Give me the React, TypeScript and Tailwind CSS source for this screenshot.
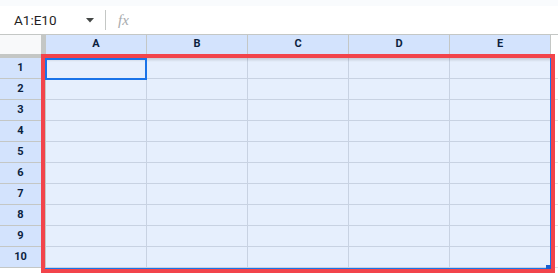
import React from "react";

const cols = ["A", "B", "C", "D", "E"];
const rows = [1, 2, 3, 4, 5, 6, 7, 8, 9, 10];

export default function App() {
  return (
    <div
      className="relative w-[558px] h-[274px] overflow-hidden bg-white"
      style={{ fontFamily: "Roboto, 'Liberation Sans', Arial, sans-serif" }}
    >
      <div className="h-[6px] bg-[#f9fbfd]" />
      {/* formula bar */}
      <div className="flex h-[28px] items-center">
        <div className="w-[76px] pl-[14px] text-[13.5px] text-[#1f1f1f]">A1:E10</div>
        <svg width="8" height="5" viewBox="0 0 8 5" className="ml-[10px]">
          <path d="M0 0 L8 0 L4 4.5 Z" fill="#444746" />
        </svg>
        <div className="ml-[11px] h-[20px] w-px bg-[#c4c7c5]" />
        <div
          className="ml-[12px] text-[15px] italic text-[#a8abae]"
          style={{ fontFamily: "'Liberation Serif', 'DejaVu Serif', serif" }}
        >
          fx
        </div>
      </div>
      {/* header row */}
      <div className="flex h-[20px] border-t border-[#c4c7c5]">
        <div className="w-[41px] bg-[#f8f9fa]" />
        <div className="w-[5px] bg-[#c4c7c5]" />
        {cols.map((c) => (
          <div
            key={c}
            className="flex w-[101px] items-center justify-center border-r border-[#c4c7c5] bg-[#d3e3fd] text-[11px] font-bold text-[#0b1f3f]"
          >
            {c}
          </div>
        ))}
        <div className="flex-1 bg-white" />
      </div>
      <div className="flex h-[4px]">
        <div className="w-[551px] bg-[#c4c7c5]" />
        <div className="flex-1 bg-white" />
      </div>
      {/* body */}
      {rows.map((r) => (
        <div key={r} className="flex h-[21px]">
          <div className="flex w-[41px] items-center justify-center border-b border-[#c4c7c5] bg-[#d3e3fd] text-[11px] font-bold text-[#0b1f3f]">
            {r}
          </div>
          <div className="w-[5px] bg-[#c4c7c5]" />
          {cols.map((c) => (
            <div
              key={c}
              className="w-[101px] border-r border-b border-[#c8d2e2] bg-[#e6effd]"
            />
          ))}
          <div className="flex-1 border-b border-[#e1e1e1] bg-white" />
        </div>
      ))}

      {/* header shadow */}
      <div className="absolute left-[45px] top-[58px] h-[4px] w-[506px] bg-gradient-to-b from-[#00000026] to-transparent" />
      {/* active cell */}
      <div className="absolute left-[45px] top-[58px] h-[22px] w-[102px] border-2 border-[#1a73e8]" />
      {/* selection outline */}
      <div className="absolute left-[45px] top-[58px] h-[211px] w-[506px] border-r border-b border-[#1a73e8]" />
      {/* fill handle */}
      <div className="absolute left-[546px] top-[265px] h-[5px] w-[5px] bg-[#1a5fd0]" />
      {/* red annotation box */}
      <div className="absolute left-[41px] top-[54px] h-[219px] w-[514px] border-4 border-[#f2444b]" />
    </div>
  );
}
